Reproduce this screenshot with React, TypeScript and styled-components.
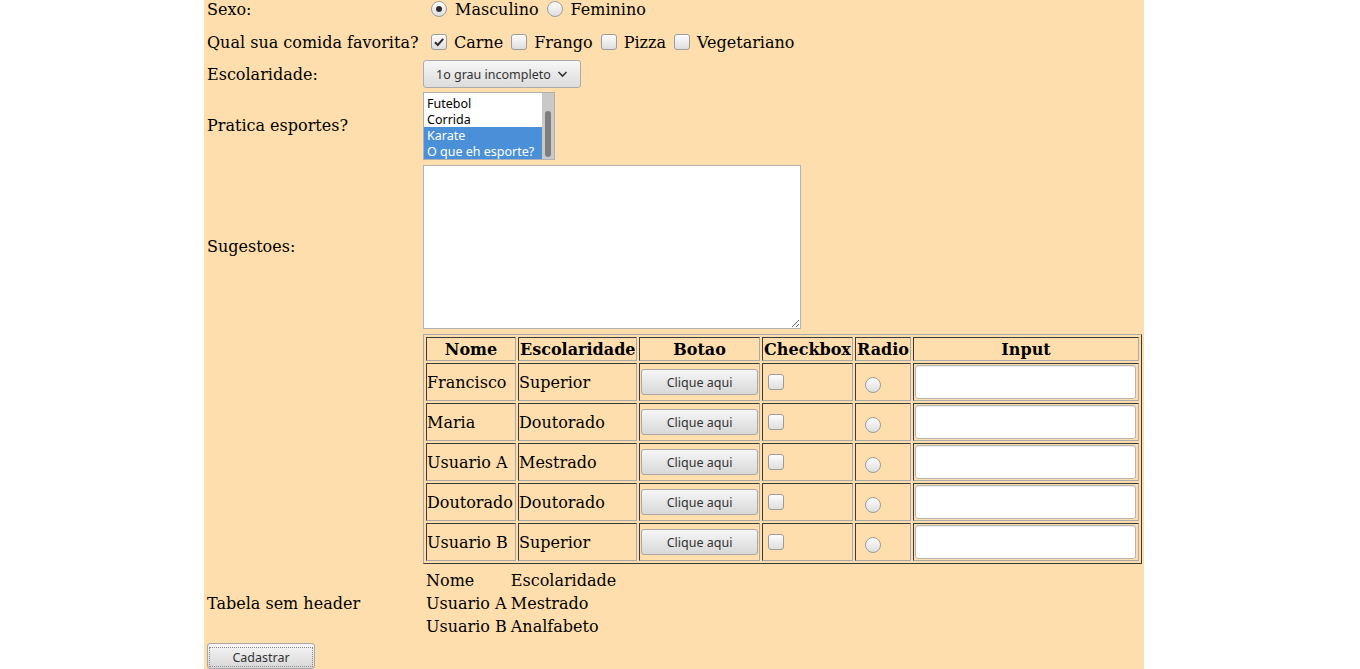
import React from "react";
import styled, { createGlobalStyle } from "styled-components";

const GlobalStyle = createGlobalStyle`
  html, body {
    margin: 0;
    padding: 0;
    background: #fff;
    overflow: hidden;
  }
  body {
    font-family: "DejaVu Serif", serif;
    font-size: 16px;
    color: #000;
  }
`;

const Panel = styled.div`
  width: 940px;
  margin: -7px 0 0 204px;
  background: #ffdead;
  box-sizing: border-box;
  padding: 0 2px 0 3px;
`;

const FormGrid = styled.div`
  display: grid;
  grid-template-columns: 216px 1fr;
  grid-template-rows: 32px 30px 30px 69px 169px 232px 72px 30px;
  row-gap: 2px;
  align-items: center;
`;

const Label = styled.div`
  white-space: nowrap;
`;

const Field = styled.div`
  display: flex;
  align-items: center;
`;

const ButtonField = styled.div`
  grid-column: 1 / span 2;
  align-self: start;
  padding-top: 2px;
`;

const Choice = styled.label`
  display: inline-flex;
  align-items: center;
  white-space: nowrap;
`;

const RadioMark = styled.span<{ $checked?: boolean }>`
  box-sizing: border-box;
  width: 16px;
  height: 16px;
  border-radius: 50%;
  border: 1px solid #9c9c9c;
  background: linear-gradient(#fdfdfd, #dedede);
  margin: 0 8px;
  display: inline-flex;
  align-items: center;
  justify-content: center;
  flex: none;
  &::after {
    content: "";
    width: 6px;
    height: 6px;
    border-radius: 50%;
    background: ${({ $checked }) => ($checked ? "#2e2e2e" : "transparent")};
  }
`;

const BoxMark = styled.span`
  box-sizing: border-box;
  width: 16px;
  height: 16px;
  border-radius: 3px;
  border: 1px solid #9c9c9c;
  background: linear-gradient(#fdfdfd, #dedede);
  margin: 0 7px 0 8px;
  display: inline-flex;
  align-items: center;
  justify-content: center;
  flex: none;
`;

const Check = () => (
  <svg width="12" height="12" viewBox="0 0 12 12">
    <path d="M2 6.2 L4.8 9 L10.2 2.8" fill="none" stroke="#2e2e2e" strokeWidth="2" />
  </svg>
);

const Radio = ({ checked }: { checked?: boolean }) => <RadioMark $checked={checked} />;
const Checkbox = ({ checked }: { checked?: boolean }) => <BoxMark>{checked && <Check />}</BoxMark>;

const widgetFont = `
  font-family: "Noto Sans", "DejaVu Sans", sans-serif;
  font-size: 12.5px;
  color: #333;
`;

const SelectButton = styled.div`
  ${widgetFont}
  box-sizing: border-box;
  width: 158px;
  height: 28px;
  border: 1px solid #ababab;
  border-radius: 3px;
  background: linear-gradient(#f7f7f7, #dcdcdc);
  display: flex;
  align-items: center;
  padding: 0 10px 0 12px;
  gap: 6px;
  white-space: nowrap;
`;

const Chevron = () => (
  <svg width="11" height="10" viewBox="0 0 11 10">
    <path d="M1.5 3 L5.5 7 L9.5 3" fill="none" stroke="#333" strokeWidth="1.6" />
  </svg>
);

const ListBox = styled.div`
  ${widgetFont}
  box-sizing: border-box;
  width: 132px;
  height: 68px;
  border: 1px solid #b0b0b0;
  background: #fff;
  display: flex;
`;

const Options = styled.div`
  flex: 1;
  padding-top: 2px;
  overflow: hidden;
`;

const OptionRow = styled.div<{ $selected?: boolean }>`
  height: 16px;
  line-height: 17px;
  padding-left: 3px;
  white-space: nowrap;
  color: ${({ $selected }) => ($selected ? "#fff" : "#000")};
  background: ${({ $selected }) => ($selected ? "#4a90d9" : "transparent")};
`;

const ScrollTrack = styled.div`
  width: 12px;
  background: #c9c9c9;
  display: flex;
  flex-direction: column;
  justify-content: flex-end;
  align-items: center;
  padding: 0 0 2px;
`;

const ScrollThumb = styled.div`
  width: 6px;
  height: 46px;
  border-radius: 3px;
  background: #7e7e7e;
`;

const TextArea = styled.textarea`
  box-sizing: border-box;
  width: 378px;
  height: 164px;
  margin: 0;
  border: 1px solid #b3b3b3;
  background: #fff;
  resize: both;
  outline: none;
`;

const DataTable = styled.table`
  border-collapse: separate;
  border-spacing: 2px;
  table-layout: fixed;
  width: 719px;
  box-sizing: border-box;
  border: 1px solid;
  border-color: #a9a9a9 #3c3c3c #3c3c3c #a9a9a9;
  font-size: 16px;
`;

const HeadCell = styled.th<{ $w: number }>`
  box-sizing: border-box;
  width: ${({ $w }) => $w}px;
  height: 24px;
  padding: 1px;
  border: 1px solid;
  border-color: #3c3c3c #a9a9a9 #a9a9a9 #3c3c3c;
  font-weight: bold;
  text-align: center;
  white-space: nowrap;
`;

const Cell = styled.td`
  box-sizing: border-box;
  height: 38px;
  padding: 1px 1px 1px 0;
  border: 1px solid;
  border-color: #3c3c3c #a9a9a9 #a9a9a9 #3c3c3c;
  vertical-align: middle;
  white-space: nowrap;
  overflow: hidden;
`;

const PushButton = styled.button<{ $w: number; $h: number }>`
  ${widgetFont}
  box-sizing: border-box;
  width: ${({ $w }) => $w}px;
  height: ${({ $h }) => $h}px;
  margin: 0;
  padding: 0;
  border: 1px solid #a8a8a8;
  border-radius: 3px;
  background: linear-gradient(#f6f6f6, #d8d8d8);
  display: block;
`;

const ButtonInCell = styled(PushButton)`
  margin-left: 1px;
`;

const FocusRing = styled.span`
  display: flex;
  align-items: center;
  justify-content: center;
  box-sizing: border-box;
  border: 1px dotted #8a8a8a;
  margin: 2px 1px 0;
  height: calc(100% - 4px);
`;

const CellBox = styled(BoxMark)`
  display: flex;
  margin: 0 0 0 5px;
`;

const CellRadio = styled(RadioMark)`
  display: flex;
  margin: 6px 0 0 9px;
`;

const TextInput = styled.input`
  box-sizing: border-box;
  display: block;
  width: 221px;
  height: 34px;
  margin: 0 0 0 1px;
  border: 1px solid #b5b5b5;
  border-radius: 3px;
  background: #fff;
  box-shadow: inset 0 1px 1px rgba(0, 0, 0, 0.08);
  outline: none;
`;

const PlainTable = styled.table`
  border-collapse: separate;
  border-spacing: 2px;
  font-size: 16px;
  td {
    padding: 1px;
    white-space: nowrap;
    line-height: 19px;
  }
`;

const people = [
  { nome: "Francisco", esc: "Superior" },
  { nome: "Maria", esc: "Doutorado" },
  { nome: "Usuario A", esc: "Mestrado" },
  { nome: "Doutorado", esc: "Doutorado" },
  { nome: "Usuario B", esc: "Superior" },
];

const columns: [string, number][] = [
  ["Nome", 90],
  ["Escolaridade", 119],
  ["Botao", 121],
  ["Checkbox", 91],
  ["Radio", 56],
  ["Input", 226],
];

export default function App() {
  return (
    <>
      <GlobalStyle />
      <Panel>
        <FormGrid>
          <Label>Sexo:</Label>
          <Field>
            <Choice>
              <Radio checked />
              Masculino
            </Choice>
            <Choice>
              <Radio />
              Feminino
            </Choice>
          </Field>

          <Label>Qual sua comida favorita?</Label>
          <Field>
            <Choice>
              <Checkbox checked />
              Carne
            </Choice>
            <Choice>
              <Checkbox />
              Frango
            </Choice>
            <Choice>
              <Checkbox />
              Pizza
            </Choice>
            <Choice>
              <Checkbox />
              Vegetariano
            </Choice>
          </Field>

          <Label>Escolaridade:</Label>
          <Field>
            <SelectButton>
              1o grau incompleto
              <Chevron />
            </SelectButton>
          </Field>

          <Label>Pratica esportes?</Label>
          <Field>
            <ListBox>
              <Options>
                <OptionRow>Futebol</OptionRow>
                <OptionRow>Corrida</OptionRow>
                <OptionRow $selected>Karate</OptionRow>
                <OptionRow $selected>O que eh esporte?</OptionRow>
              </Options>
              <ScrollTrack>
                <ScrollThumb />
              </ScrollTrack>
            </ListBox>
          </Field>

          <Label>Sugestoes:</Label>
          <Field>
            <TextArea />
          </Field>

          <Label />
          <Field>
            <DataTable>
              <thead>
                <tr>
                  {columns.map(([title, w]) => (
                    <HeadCell key={title} $w={w}>
                      {title}
                    </HeadCell>
                  ))}
                </tr>
              </thead>
              <tbody>
                {people.map((p, i) => (
                  <tr key={i}>
                    <Cell>{p.nome}</Cell>
                    <Cell>{p.esc}</Cell>
                    <Cell>
                      <ButtonInCell $w={117} $h={26}>Clique aqui</ButtonInCell>
                    </Cell>
                    <Cell>
                      <CellBox />
                    </Cell>
                    <Cell>
                      <CellRadio />
                    </Cell>
                    <Cell>
                      <TextInput type="text" />
                    </Cell>
                  </tr>
                ))}
              </tbody>
            </DataTable>
          </Field>

          <Label>Tabela sem header</Label>
          <Field>
            <PlainTable>
              <tbody>
                <tr>
                  <td>Nome</td>
                  <td>Escolaridade</td>
                </tr>
                <tr>
                  <td>Usuario A</td>
                  <td>Mestrado</td>
                </tr>
                <tr>
                  <td>Usuario B</td>
                  <td>Analfabeto</td>
                </tr>
              </tbody>
            </PlainTable>
          </Field>

          <ButtonField>
            <PushButton $w={108} $h={26}>
              <FocusRing>Cadastrar</FocusRing>
            </PushButton>
          </ButtonField>
        </FormGrid>
      </Panel>
    </>
  );
}
